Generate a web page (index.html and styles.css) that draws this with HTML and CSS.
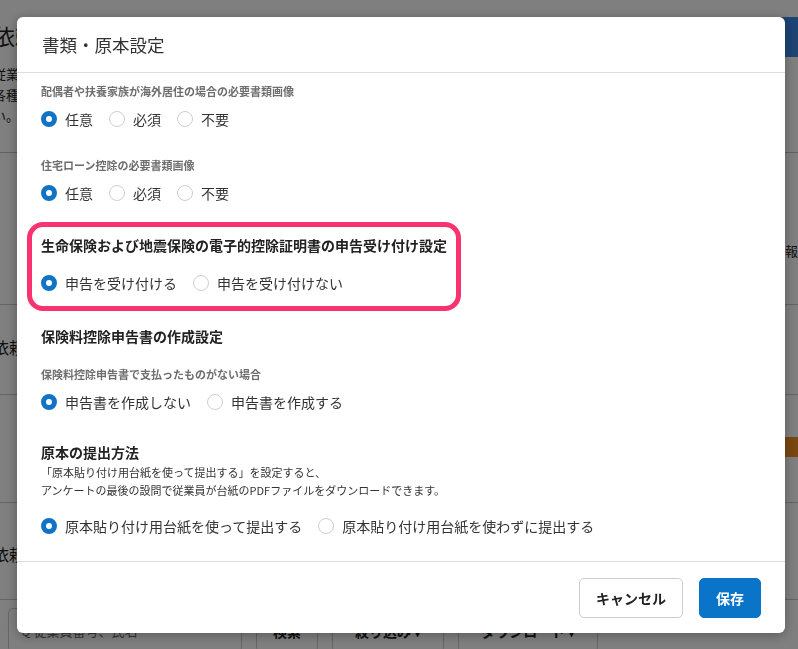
FILE: index.html
```html
<!DOCTYPE html>
<html lang="ja">

<head>
    <meta charset="UTF-8">
    <meta name="viewport" content="width=device-width, initial-scale=1.0">
    <title>書類・原本設定</title>
    <link rel="stylesheet" href="styles.css">
</head>

<body>
    <!-- page behind the dialog -->
    <div class="page">
        <div class="page-head">
            <div class="page-head-row">
                <h1 class="page-title">依頼一覧</h1>
                <span class="page-btn"></span>
            </div>
            <p class="page-text">従業員に送る年末調整の依頼を作成します<br>各種書類の設定はこちらで変更できます。詳しくはヘルプを参照してくださ<br>い。</p>
        </div>
        <div class="page-block page-block-info">
            <span class="page-side">報</span>
        </div>
        <div class="page-block page-block-sub">
            <h2 class="page-sub">依頼中</h2>
        </div>
        <div class="page-block page-block-warn">
            <span class="page-warn"></span>
        </div>
        <div class="page-block page-block-sub2">
            <h2 class="page-sub">依頼済み</h2>
        </div>
        <div class="page-tools">
            <div class="page-search">Q 従業員番号、氏名</div>
            <span class="page-tool">検索</span>
            <span class="page-tool page-tool-wide">絞り込み ▾</span>
            <span class="page-tool page-tool-wide">ダウンロード ▾</span>
        </div>
    </div>

    <div class="overlay"></div>

    <div class="modal">
        <div class="modal-header">
            <h2>書類・原本設定</h2>
        </div>

        <div class="modal-body">
            <div class="field">
                <p class="field-label">配偶者や扶養家族が海外居住の場合の必要書類画像</p>
                <div class="radios">
                    <label><input type="radio" name="abroad" checked>任意</label>
                    <label><input type="radio" name="abroad">必須</label>
                    <label><input type="radio" name="abroad">不要</label>
                </div>
            </div>

            <div class="field field-next">
                <p class="field-label">住宅ローン控除の必要書類画像</p>
                <div class="radios">
                    <label><input type="radio" name="loan" checked>任意</label>
                    <label><input type="radio" name="loan">必須</label>
                    <label><input type="radio" name="loan">不要</label>
                </div>
            </div>

            <div class="highlight">
                <h3 class="section-title">生命保険および地震保険の電子的控除証明書の申告受け付け設定</h3>
                <div class="radios">
                    <label><input type="radio" name="cert" checked>申告を受け付ける</label>
                    <label><input type="radio" name="cert">申告を受け付けない</label>
                </div>
            </div>

            <div class="section section-first">
                <h3 class="section-title">保険料控除申告書の作成設定</h3>
                <div class="field field-in">
                    <p class="field-label">保険料控除申告書で支払ったものがない場合</p>
                    <div class="radios">
                        <label><input type="radio" name="create" checked>申告書を作成しない</label>
                        <label><input type="radio" name="create">申告書を作成する</label>
                    </div>
                </div>
            </div>

            <div class="section section-second">
                <h3 class="section-title">原本の提出方法</h3>
                <p class="note">「原本貼り付け用台紙を使って提出する」を設定すると、<br>アンケートの最後の設問で従業員が台紙のPDFファイルをダウンロードできます。</p>
                <div class="radios radios-note">
                    <label><input type="radio" name="paper" checked>原本貼り付け用台紙を使って提出する</label>
                    <label><input type="radio" name="paper">原本貼り付け用台紙を使わずに提出する</label>
                </div>
            </div>
        </div>

        <div class="modal-footer">
            <button class="btn btn-cancel">キャンセル</button>
            <button class="btn btn-save">保存</button>
        </div>
    </div>
</body>

</html>
```

FILE: styles.css
```css
* {
    box-sizing: border-box;
}

body {
    margin: 0;
    height: 649px;
    overflow: hidden;
    font-family: "Noto Sans CJK JP", "Noto Sans", sans-serif;
    color: #333;
}

button {
    font-family: inherit;
}

/* background page */

.page {
    margin-left: -7px;
    height: 649px;
    overflow: hidden;
    background-color: #fff;
}

.page-head {
    height: 153px;
    padding-top: 12px;
    border-bottom: 1px solid #c4c4c4;
}

.page-head-row {
    display: flex;
    justify-content: space-between;
    align-items: center;
    height: 46px;
}

.page-title {
    margin: 0;
    font-size: 22px;
    font-weight: normal;
    color: #222;
}

.page-btn {
    width: 20px;
    height: 40px;
    margin-top: 4px;
    background-color: #3a88e8;
    border-radius: 5px 0 0 5px;
}

.page-text {
    margin: 5px 0 0;
    font-size: 13px;
    line-height: 21px;
    color: #222;
    white-space: nowrap;
}

.page-block {
    display: flex;
    border-bottom: 1px solid #c8c8c8;
}

.page-block-info {
    height: 152px;
    justify-content: flex-end;
    padding-top: 88px;
}

.page-side {
    width: 13px;
    overflow: hidden;
    font-size: 13px;
    line-height: 20px;
    color: #222;
}

.page-block-sub {
    height: 90px;
    padding-top: 31px;
}

.page-block-sub2 {
    height: 97px;
    padding-top: 40px;
}

.page-sub {
    margin: 0;
    font-size: 16px;
    line-height: 22px;
    font-weight: normal;
    color: #222;
}

.page-block-warn {
    height: 108px;
    justify-content: flex-end;
    padding-top: 42px;
}

.page-warn {
    width: 14px;
    height: 20px;
    background-color: #f09020;
}

.page-tools {
    display: flex;
    gap: 14px;
    padding: 8px 0 0 15px;
}

.page-search {
    width: 234px;
    height: 44px;
    padding: 12px 12px;
    font-size: 13px;
    color: #666;
    border: 1px solid #ccc;
    border-radius: 5px;
}

.page-tool {
    height: 44px;
    padding: 12px 16px;
    font-size: 14px;
    font-weight: bold;
    color: #222;
    border: 1px solid #ccc;
    border-radius: 5px;
}

.page-tool-wide {
    padding: 12px 22px;
}

.overlay {
    position: fixed;
    inset: 0;
    background-color: rgba(0, 0, 0, 0.5);
}

/* dialog */

.modal {
    position: fixed;
    top: 17px;
    left: 17px;
    width: 768px;
    height: 616px;
    display: flex;
    flex-direction: column;
    background-color: #fff;
    border-radius: 6px;
    box-shadow: 0 2px 12px rgba(0, 0, 0, 0.3);
}

.modal-header {
    display: flex;
    align-items: center;
    height: 56px;
    padding: 0 25px;
    border-bottom: 1px solid #ddd;
}

.modal-header h2 {
    margin: 0;
    font-size: 17.5px;
    font-weight: normal;
    color: #333;
}

.modal-body {
    flex: 1;
    overflow: hidden;
    padding: 10px 24px 0;
}

.field-label {
    margin: 0 0 10px;
    font-size: 11px;
    line-height: 16px;
    font-weight: bold;
    color: #6e6e6e;
}

.field-next {
    margin-top: 28px;
}

.field-in {
    margin-top: 20px;
}

.radios {
    display: flex;
    height: 20px;
    align-items: center;
}

.radios label {
    display: flex;
    align-items: center;
    margin-right: 16px;
    font-size: 14px;
    line-height: 20px;
    color: #333;
    white-space: nowrap;
}

.radios input[type="radio"] {
    appearance: none;
    width: 16px;
    height: 16px;
    margin: 0 8px 0 0;
    border: 1px solid #cfcfcf;
    border-radius: 50%;
    background-color: #fff;
}

.radios input[type="radio"]:checked {
    border: 5px solid #1173c6;
}

.section-title {
    margin: 0;
    font-size: 14px;
    line-height: 20px;
    font-weight: bold;
    color: #222;
}

.highlight {
    width: fit-content;
    margin: 19px 0 0 -14px;
    padding: 8px 9px 13px;
    border: 5px solid #f8336f;
    border-radius: 16px;
}

.highlight .section-title {
    margin-bottom: 18px;
}

.section-first {
    margin-top: 15px;
}

.section-second {
    margin-top: 30px;
}

.note {
    margin: 1px 0 0;
    font-size: 11px;
    line-height: 18px;
    color: #333;
}

.radios-note {
    margin-top: 17px;
}

.modal-footer {
    display: flex;
    justify-content: flex-end;
    gap: 16px;
    padding: 16px 24px 15px;
    border-top: 1px solid #ddd;
}

.btn {
    height: 40px;
    padding: 0;
    font-size: 14px;
    font-weight: bold;
    border-radius: 5px;
    cursor: pointer;
}

.btn-cancel {
    width: 104px;
    color: #222;
    background-color: #fff;
    border: 1px solid #ccc;
}

.btn-save {
    width: 62px;
    color: #fff;
    background-color: #0a74c8;
    border: 1px solid #0a74c8;
}
```
